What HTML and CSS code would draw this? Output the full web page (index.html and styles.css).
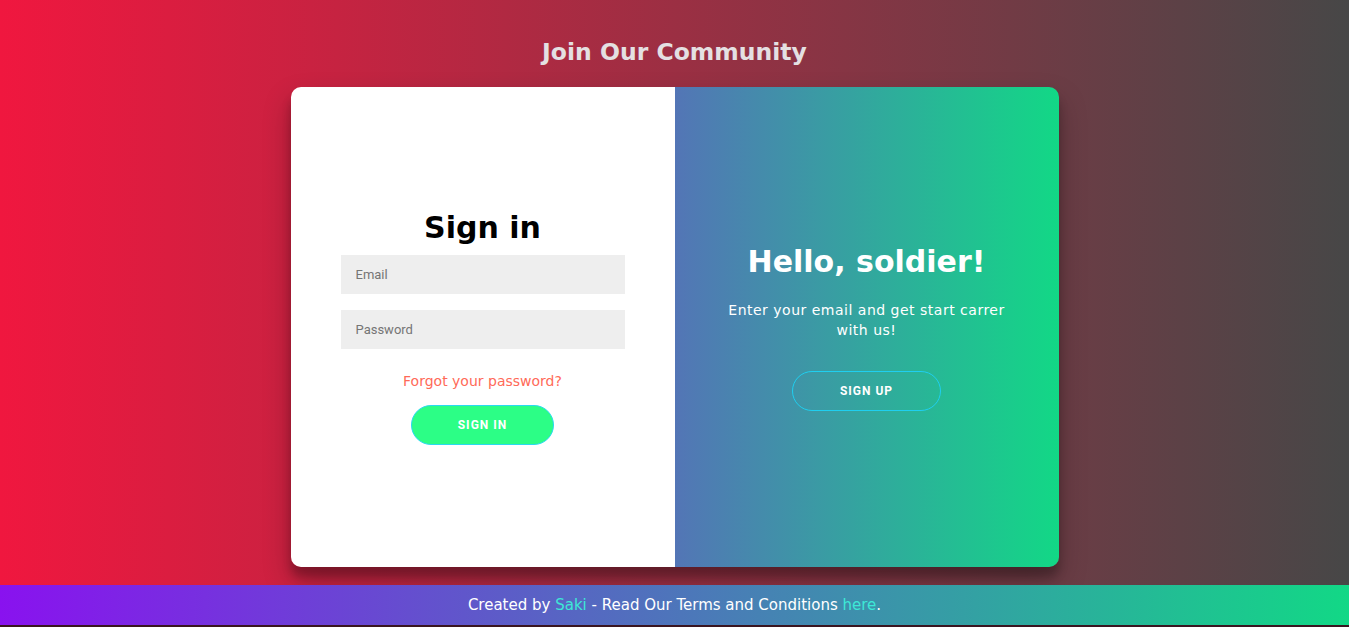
FILE: index.html
```html
<!DOCTYPE html>
<html lang="en">
<head>
<meta charset="utf-8">
<title>Join Our Community</title>
<link rel="stylesheet" href="styles.css">
</head>
<body>
  <h2 class="page-title">Join Our Community</h2>
  <div class="card">
    <form class="signin" onsubmit="return false">
      <h1 class="heading heading-dark">Sign in</h1>
      <input class="field" type="email" placeholder="Email">
      <input class="field" type="password" placeholder="Password">
      <a class="forgot" href="#">Forgot your password?</a>
      <button class="btn btn-solid" type="button">Sign In</button>
    </form>
    <div class="overlay">
      <h1 class="heading heading-light">Hello, soldier!</h1>
      <p class="lead">Enter your email and get start carrer with us!</p>
      <button class="btn btn-ghost" type="button">Sign Up</button>
    </div>
  </div>
  <footer class="footer">
    <p>Created by <a href="#">Saki</a> - Read Our Terms and Conditions <a href="#">here</a>.</p>
  </footer>
</body>
</html>
```
FILE: styles.css
```css
* { box-sizing: border-box; }

html, body { height: 100%; }

body {
  margin: 0;
  height: 627px;
  display: flex;
  flex-direction: column;
  align-items: center;
  background: linear-gradient(to right, #f0173f 0%, #474747 100%);
  font-family: "DejaVu Sans", "Open Sans", sans-serif;
  overflow: hidden;
}

.page-title {
  margin: 37px 0 20px;
  font-size: 23.5px;
  line-height: 30px;
  font-weight: 700;
  color: #e4e0e2;
}

.card {
  width: 768px;
  height: 480px;
  border-radius: 10px;
  overflow: hidden;
  display: flex;
  box-shadow: 0 14px 28px rgba(0,0,0,0.25), 0 10px 10px rgba(0,0,0,0.22);
  flex-shrink: 0;
}

.signin {
  flex: 0 0 384px;
  min-width: 0;
  background: #fff;
  display: flex;
  flex-direction: column;
  align-items: center;
  justify-content: center;
  padding: 0 50px;
  text-align: center;
}

.overlay {
  flex: 0 0 384px;
  min-width: 0;
  background: linear-gradient(to right, #9412e6 0%, #12d886 100%);
  background-size: 200% 100%;
  background-position: right center;
  display: flex;
  flex-direction: column;
  align-items: center;
  justify-content: center;
  padding: 0 40px 3px;
  text-align: center;
  color: #fff;
}

.heading {
  margin: 0;
  font-size: 30px;
  font-weight: 700;
}

.heading-dark { color: #000; line-height: 38px; }
.heading-light { color: #fff; line-height: 44px; }

.field {
  display: block;
  width: 100%;
  min-width: 0;
  height: 39px;
  margin: 8px 0;
  padding: 12px 15px;
  border: none;
  background: #eee;
  font-family: Roboto, "Liberation Sans", sans-serif;
  font-size: 13px;
  color: #333;
  outline: none;
}

.field::placeholder { color: #757575; }

.forgot {
  margin: 15px 0 15px;
  font-size: 14px;
  line-height: 18px;
  color: #ff6a58;
  text-decoration: none;
  font-weight: 400;
}

.lead {
  margin: 16px 0 31px;
  font-size: 14px;
  line-height: 20px;
  letter-spacing: 0.5px;
  font-weight: 400;
}

.btn {
  height: 40px;
  border-radius: 20px;
  font-family: Roboto, "Liberation Sans", sans-serif;
  font-size: 12px;
  font-weight: 700;
  letter-spacing: 1px;
  text-transform: uppercase;
  color: #fff;
  cursor: pointer;
}

.btn-solid {
  width: 143px;
  background: #2cfe86;
  border: 1px solid #2ad9f0;
}

.btn-ghost {
  width: 149px;
  background: transparent;
  border: 1px solid #1fcff0;
}

.footer {
  align-self: stretch;
  margin-top: 18px;
  height: 42px;
  background: linear-gradient(to right, #8912ef 0%, #12d886 100%);
  border-bottom: 2px solid #3a1520;
  display: flex;
  align-items: center;
  justify-content: center;
  color: #fff;
  font-size: 15px;
}

.footer p { margin: 0; }

.footer a {
  color: #3de8d6;
  text-decoration: none;
}
```
